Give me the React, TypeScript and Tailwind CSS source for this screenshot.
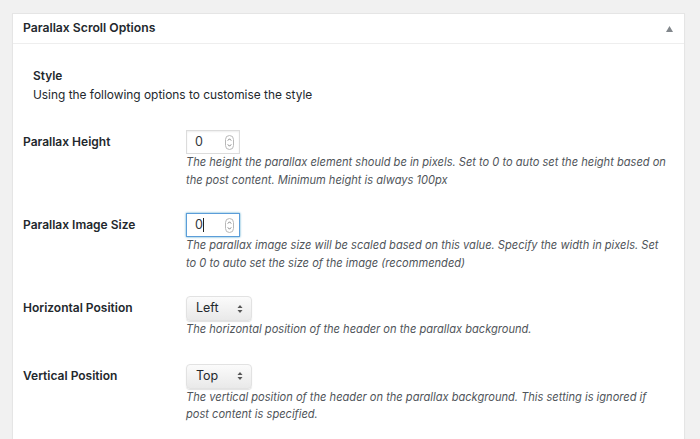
import React from "react";

const font = { fontFamily: "Inter, 'Noto Sans', 'Liberation Sans', sans-serif" };

// little up/down pill shown inside number inputs
const Spinner: React.FC = () => (
  <svg width="9" height="15" viewBox="0 0 9 15" className="shrink-0">
    <rect x="0.5" y="0.5" width="8" height="14" rx="4" fill="#fff" stroke="#b8b8b8" />
    <path d="M2.8 5.6 L4.5 3.8 L6.2 5.6" fill="none" stroke="#777" strokeWidth="0.9" />
    <path d="M2.8 9.4 L4.5 11.2 L6.2 9.4" fill="none" stroke="#777" strokeWidth="0.9" />
  </svg>
);

const NumberBox: React.FC<{ focused?: boolean }> = ({ focused }) => (
  <div
    className={
      "flex items-center justify-between w-[54px] h-[24px] pl-[8px] pr-[5px] bg-white text-[12.5px] text-[#32373c] " +
      (focused
        ? "border border-[#5b9dd9] shadow-[0_0_2px_rgba(30,140,190,0.8)]"
        : "border border-[#dcdcdc] shadow-[inset_0_1px_2px_rgba(0,0,0,0.07)]")
    }
  >
    <span className="flex items-center">
      0{focused && <span className="inline-block w-px h-[14px] bg-[#222]" />}
    </span>
    <Spinner />
  </div>
);

const SelectBox: React.FC<{ value: string }> = ({ value }) => (
  <div className="flex items-center justify-between w-[66px] h-[25px] pl-[9px] pr-[8px] rounded-[4px] bg-gradient-to-b from-[#fbfbfb] to-[#e9e9e9] border border-[#e2e2e2] shadow-[0_1px_1px_rgba(0,0,0,0.12)] text-[12.5px] text-[#23282d]">
    <span>{value}</span>
    <svg width="6" height="10" viewBox="0 0 6 10">
      <path d="M0.5 4 L3 1 L5.5 4 Z" fill="#555" />
      <path d="M0.5 6 L3 9 L5.5 6 Z" fill="#555" />
    </svg>
  </div>
);

type Row = { label: string; control: React.ReactNode; desc: string[]; mt: string };

const rows: Row[] = [
  {
    label: "Parallax Height",
    control: <NumberBox />,
    desc: [
      "The height the parallax element should be in pixels. Set to 0 to auto set the height based on",
      "the post content. Minimum height is always 100px",
    ],
    mt: "mt-[26px]",
  },
  {
    label: "Parallax Image Size",
    control: <NumberBox focused />,
    desc: [
      "The parallax image size will be scaled based on this value. Specify the width in pixels. Set",
      "to 0 to auto set the size of the image (recommended)",
    ],
    mt: "mt-[24px]",
  },
  {
    label: "Horizontal Position",
    control: <SelectBox value="Left" />,
    desc: ["The horizontal position of the header on the parallax background."],
    mt: "mt-[24px]",
  },
  {
    label: "Vertical Position",
    control: <SelectBox value="Top" />,
    desc: [
      "The vertical position of the header on the parallax background. This setting is ignored if",
      "post content is specified.",
    ],
    mt: "mt-[25px]",
  },
];

export default function App() {
  return (
    <div className="w-[700px] h-[439px] overflow-hidden bg-[#f1f1f1] pt-[13px] pl-[12px] pr-[15px]" style={font}>
      <div className="h-[440px] bg-white border border-[#e5e5e5] shadow-[0_1px_1px_rgba(0,0,0,0.04)]">
        {/* Header */}
        <div className="flex items-center justify-between h-[30px] pl-[10px] pr-[11px] border-b border-[#eeeeee]">
          <h2 className="text-[12.2px] font-semibold text-[#23282d]">Parallax Scroll Options</h2>
          <svg width="7" height="6" viewBox="0 0 7 6">
            <path d="M0 6 L3.5 0 L7 6 Z" fill="#82878c" />
          </svg>
        </div>

        <div className="px-[10px]">
          {/* Section intro */}
          <div className="pl-[10px] pt-[22px] text-[11.9px] leading-[19px] text-[#23282d]">
            <div className="font-semibold">Style</div>
            <div>Using the following options to customise the style</div>
          </div>

          {rows.map((r) => (
            <div key={r.label} className={"flex " + r.mt}>
              <div className="w-[163px] shrink-0 h-[24px] flex items-center text-[12px] font-semibold text-[#23282d]">
                {r.label}
              </div>
              <div>
                {r.control}
                <div className="whitespace-nowrap text-[11.1px] leading-[17.5px] italic text-[#50555a]">
                  {r.desc.map((d) => (
                    <div key={d}>{d}</div>
                  ))}
                </div>
              </div>
            </div>
          ))}
        </div>
      </div>
    </div>
  );
}
